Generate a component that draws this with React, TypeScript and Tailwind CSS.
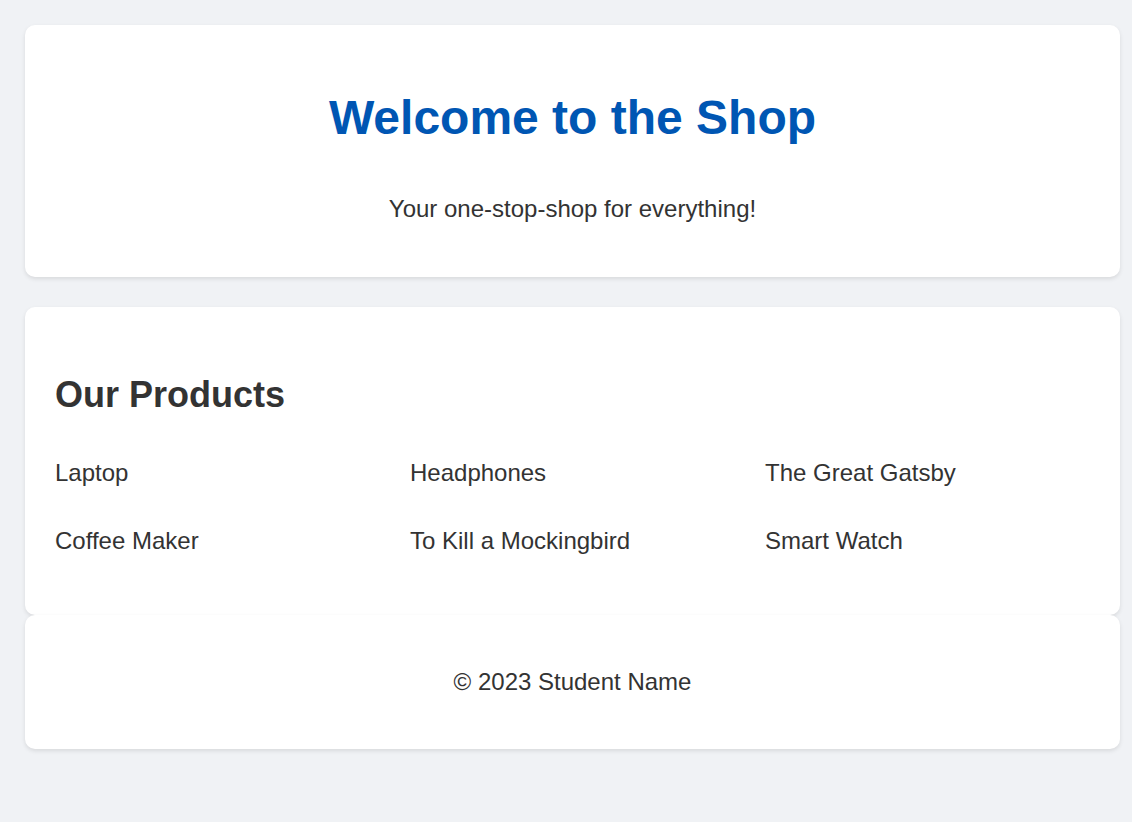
export default function App() {
  const products = [
    "Laptop",
    "Headphones",
    "The Great Gatsby",
    "Coffee Maker",
    "To Kill a Mockingbird",
    "Smart Watch",
  ];
  return (
    <div
      className="min-h-[822px] bg-[#f0f2f5] pl-[25px] pr-[12px] pt-[25px] text-[#333333]"
      style={{ fontFamily: '"Liberation Sans", Arial, sans-serif' }}
    >
      <header className="rounded-[10px] bg-white px-[30px] pb-[56px] pt-[69px] text-center shadow-[0_2px_4px_rgba(0,0,0,0.1)]">
        <h1 className="text-[48px] font-bold leading-none text-[#0056b3]">Welcome to the Shop</h1>
        <p className="mt-[55px] text-[24px] leading-none">Your one-stop-shop for everything!</p>
      </header>
      <section className="mt-[30px] rounded-[10px] bg-white px-[30px] pb-[62px] pt-[70px] shadow-[0_2px_4px_rgba(0,0,0,0.1)]">
        <h2 className="text-[36px] font-bold leading-none">Our Products</h2>
        <div className="mt-[48px] grid grid-cols-3 gap-x-[30px] gap-y-[44px]">
          {products.map((p) => (
            <div key={p} className="text-[24px] leading-none">
              {p}
            </div>
          ))}
        </div>
      </section>
      <footer className="rounded-[10px] bg-white px-[30px] pb-[55px] pt-[55px] text-center shadow-[0_2px_4px_rgba(0,0,0,0.1)]">
        <p className="text-[24px] leading-none">© 2023 Student Name</p>
      </footer>
    </div>
  );
}
